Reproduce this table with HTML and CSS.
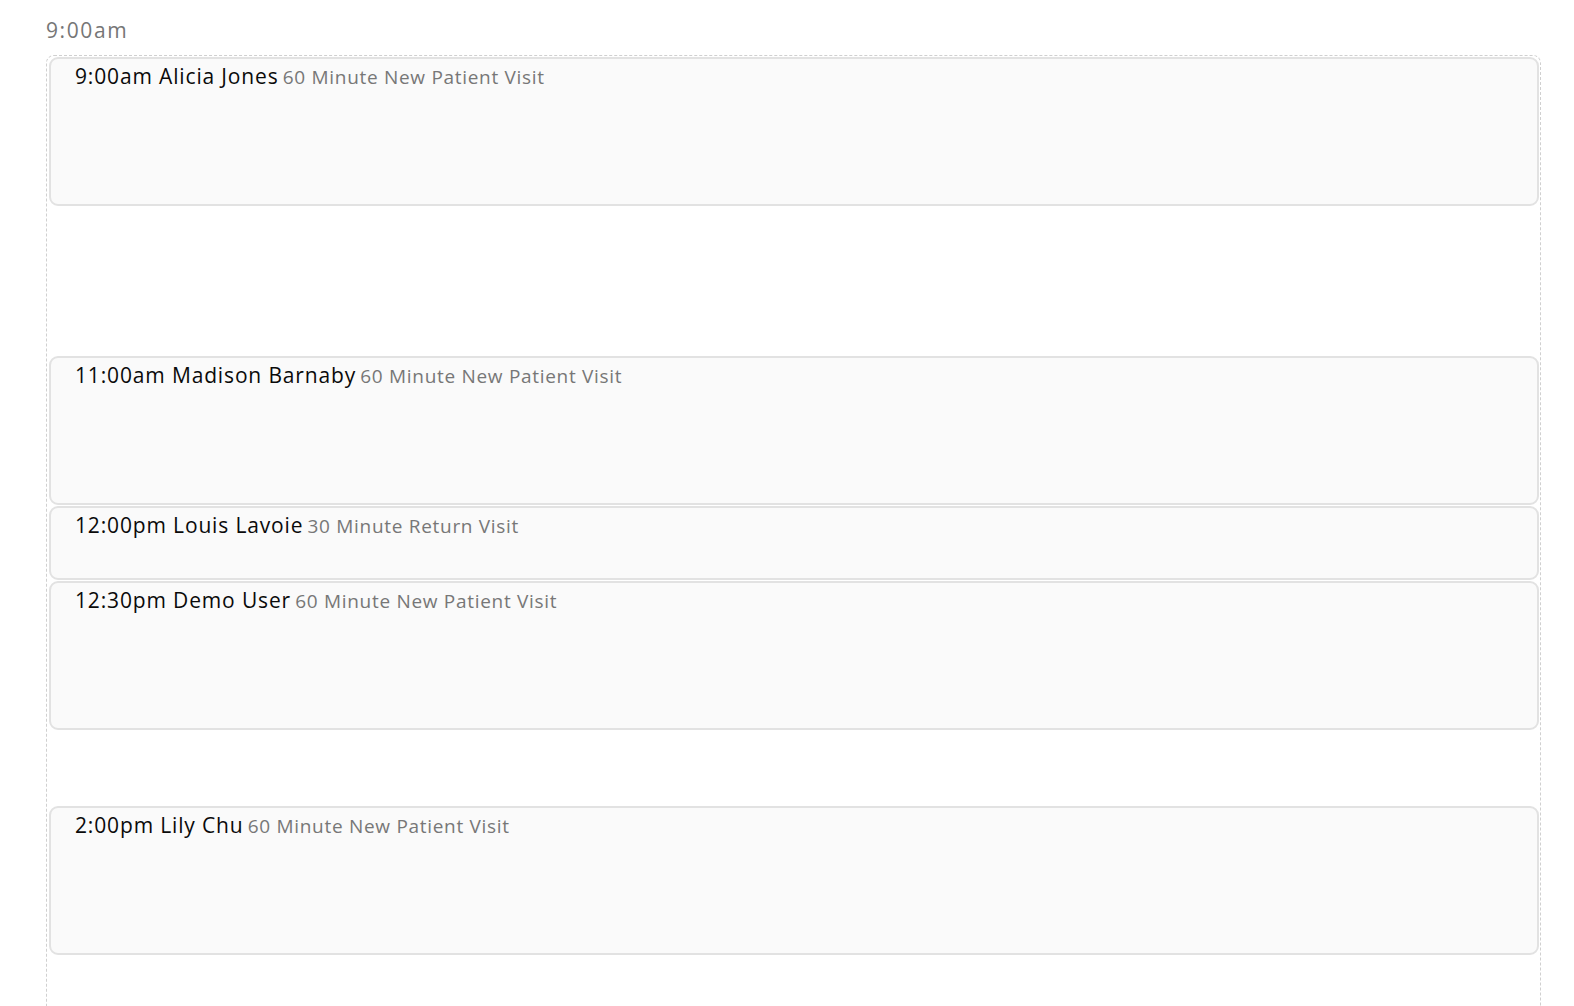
FILE: index.html
```html
<!DOCTYPE html>
<html>
<head>
<meta charset="utf-8">
<link rel="stylesheet" href="styles.css">
</head>
<body>
<div class="day">
  <div class="day-label">9:00am</div>
  <div class="timeline">
    <div class="appt h60"><span class="who">9:00am Alicia Jones</span> <span class="kind">60 Minute New Patient Visit</span></div>
    <div class="gap h60"></div>
    <div class="appt h60"><span class="who">11:00am Madison Barnaby</span> <span class="kind">60 Minute New Patient Visit</span></div>
    <div class="appt h30"><span class="who">12:00pm Louis Lavoie</span> <span class="kind">30 Minute Return Visit</span></div>
    <div class="appt h60"><span class="who">12:30pm Demo User</span> <span class="kind">60 Minute New Patient Visit</span></div>
    <div class="gap h30"></div>
    <div class="appt h60"><span class="who">2:00pm Lily Chu</span> <span class="kind">60 Minute New Patient Visit</span></div>
    <div class="gap h60"></div>
  </div>
</div>
</body>
</html>
```

FILE: styles.css
```css
html, body {
  margin: 0;
  padding: 0;
  background: #ffffff;
  height: 100%;
  overflow: hidden;
}
body {
  font-family: "Open Sans", "Liberation Sans", sans-serif;
  color: #0a0a0a;
}
.day {
  padding: 15px 33px 0 46px;
}
.day-label {
  font-size: 21px;
  line-height: 30px;
  color: #767676;
  height: 40px;
  letter-spacing: 1.6px;
}
.timeline {
  border: 1px dashed #d0d0d0;
  border-bottom: none;
  border-radius: 8px 8px 0 0;
  padding: 1px 1px 0 2px;
  min-height: 1000px;
}
.appt {
  box-sizing: border-box;
  background: #fafafa;
  border: 2px solid #e2e2e2;
  border-radius: 9px;
  padding: 2px 0 0 24px;
  margin-bottom: 1px;
  line-height: 30px;
}
.h60 { height: 149px; }
.h30 { height: 74px; }
.gap.h60 { height: 149px; }
.gap.h30 { height: 75px; }
.who {
  font-size: 21px;
  color: #0a0a0a;
  letter-spacing: 0.85px;
}
.kind {
  font-size: 19px;
  color: #777;
  letter-spacing: 0.7px;
}
```
